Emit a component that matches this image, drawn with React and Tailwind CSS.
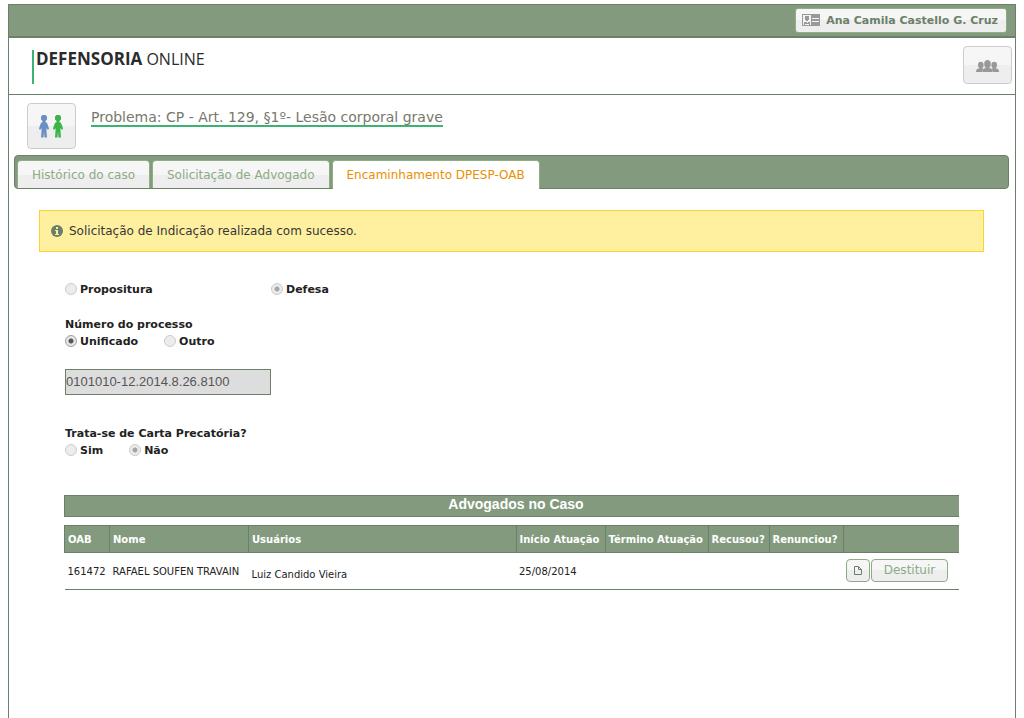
import { useState } from 'react';

const verdana = "font-['DejaVu_Sans',Verdana,sans-serif]";
const buttonFace = 'bg-linear-to-b from-[#f6f6f6] from-50% to-[#eeeeee] to-50%';

const CardIcon = () => (
  <svg className="mb-1" width="18" height="12" viewBox="0 0 18 12" shapeRendering="crispEdges" aria-hidden="true">
    <rect width="18" height="12" fill="#999999" />
    <rect x="1" y="1" width="8" height="10" fill="#f4f4f4" />
    <path d="M3 2h4v4H3zM4 6h2v1H4zM2 8h2l1 1 1-1h2v3H7v-1H3v1H2z" fill="#999999" />
    <path d="M10 4h7v1h-7zM10 7h7v1h-7z" fill="#f4f4f4" />
  </svg>
);

const GroupIcon = () => (
  <svg className="mt-[2px]" width="23" height="12" viewBox="0 0 23 12" fill="#99999b" aria-hidden="true">
    <ellipse cx="4.800" cy="5" rx="2.800" ry="3.200" />
    <ellipse cx="18.200" cy="5" rx="2.800" ry="3.200" />
    <path d="M0 12c0-2.500.8-3 3.300-3.700V7h3v1.500l1.200.5L6 12zM23 12c0-2.500-.8-3-3.300-3.700V7h-3v1.500l-1.200.5L17 12z" />
    <path d="M6.500 12c0-3 .8-3.300 3.200-4V6h3.600v2c2.400.7 3.200 1 3.200 4z" />
    <ellipse cx="11.500" cy="3.900" rx="3.300" ry="3.900" />
  </svg>
);

const Person = ({ color }) => (
  <svg width="10" height="23" viewBox="0 0 10 23" fill={color} aria-hidden="true">
    <path d="M3.500 0h3L8 1.500v3L6.500 6v1L8 8l1 2.500 1 3L9 15l-1.500-2V16L8 22.500H5.500L5 17l-.5 5.500H2l.5-6.500V13L1 15 0 13.500l1-3L2 8l1.500-1V6L2 4.500v-3z" />
  </svg>
);

const InfoIcon = () => (
  <svg width="12" height="12" viewBox="0 0 12 12" aria-hidden="true">
    <circle cx="6" cy="6" r="6" fill="#6b8068" />
    <path d="M5 2h2v2H5zM4 5h3v4h1v1H4V9h1V6H4z" fill="#fff0a0" />
  </svg>
);

const DocIcon = () => (
  <svg width="8" height="9" viewBox="0 0 8 9" fill="none" stroke="#6b8068" aria-hidden="true">
    <path d="M.5.5h4l3 3v5h-7z" />
    <path d="M4.500.5v3h3" />
  </svg>
);

const Radio = ({ name, value, label, checked, muted, onChange }) => (
  <label className="flex items-start gap-[3px]">
    <input
      type="radio"
      name={name}
      checked={checked}
      onChange={() => onChange(value)}
      className={`mt-px size-3 appearance-none rounded-full border ${
        muted
          ? 'border-[#cccccc] bg-[#ececec] checked:bg-[radial-gradient(circle,#a6a6a6_0_2px,#ececec_3px)]'
          : 'border-[#a0a0a0] bg-[#e6e6e6] checked:bg-[radial-gradient(circle,#555555_0_2px,#e6e6e6_3px)]'
      }`}
    />
    {label}
  </label>
);

const tabs = ['Histórico do caso', 'Solicitação de Advogado', 'Encaminhamento DPESP-OAB'];

const columns = [
  { title: 'OAB', width: 'w-[45px]' },
  { title: 'Nome', width: 'w-[139px]' },
  { title: 'Usuários', width: '' },
  { title: 'Início Atuação', width: 'w-[89px]' },
  { title: 'Término Atuação', width: 'w-[103px]' },
  { title: 'Recusou?', width: 'w-[61px]' },
  { title: 'Renunciou?', width: 'w-[74px]' },
  { title: '', width: 'w-[116px]' },
];

export default function App() {
  const [tab, setTab] = useState(2);
  const [tipo, setTipo] = useState('defesa');
  const [formato, setFormato] = useState('unificado');
  const [carta, setCarta] = useState('nao');

  return (
    <div className={`mx-2 mt-1 min-h-[calc(100vh-4px)] border border-b-0 border-[#6b8068] bg-white text-[#222222] ${verdana}`}>
      <div className="flex h-[33px] items-center justify-end border-b-2 border-[#6b8068] bg-[#839a7e] pr-2">
        <button className={`flex h-[25px] items-center gap-[6px] rounded-[3px] border border-[#8cb083] pt-[2px] pr-2 pl-[6px] text-[11px] font-bold whitespace-nowrap text-[#6b8068] ${buttonFace}`}>
          <CardIcon />
          Ana Camila Castello G. Cruz
        </button>
      </div>

      <header className="flex h-[57px] items-start justify-between border-b border-[#6b8068] pr-[3px] pl-[23px]">
        <h1 className="mt-3 h-[34px] border-l-2 border-[#3cb371] pl-[2px] font-['Open_Sans','Noto_Sans',sans-serif] text-[16px] leading-[18px] text-[#2b2b2b]">
          <strong className="text-[17px]">DEFENSORIA</strong> ONLINE
        </h1>
        <button aria-label="Grupos" className={`mt-2 flex h-[38px] w-[49px] items-center justify-center rounded-[4px] border border-[#cccccc] ${buttonFace}`}>
          <GroupIcon />
        </button>
      </header>

      <div className="flex h-[60px] items-start gap-[15px] pt-2 pl-[18px]">
        <button aria-label="Pessoas" className={`flex h-[46px] w-[49px] items-center justify-center gap-1 rounded-[4px] border border-[#cccccc] pr-[2px] ${buttonFace}`}>
          <Person color="#6a8fc4" />
          <Person color="#3bb449" />
        </button>
        <h2 className="mt-[6px] border-b-2 border-[#3cb371] text-[14px] leading-4 text-[#77796c]">
          Problema: CP - Art. 129, §1º- Lesão corporal grave
        </h2>
      </div>

      <nav className="mr-[6px] ml-[5px] flex h-[34px] items-end gap-[2px] rounded-[4px] border border-[#6b8068] bg-[#839a7e] pl-[2px]">
        {tabs.map((title, i) => (
          <button
            key={title}
            onClick={() => setTab(i)}
            className={`rounded-t-[4px] border border-b-0 border-[#8cb083] px-[14px] text-[12px] whitespace-nowrap ${
              tab === i
                ? '-mb-px h-[29px] bg-white text-[#eb8f00]'
                : `h-7 text-[#8cac85] ${buttonFace}`
            }`}
          >
            {title}
          </button>
        ))}
      </nav>

      <main className="pt-[21px] pr-[31px] pl-[30px]">
        <p className="flex h-[42px] items-center gap-[6px] border border-[#fad42e] bg-[#fff0a0] pl-[11px] text-[12px] text-[#363636]">
          <InfoIcon />
          Solicitação de Indicação realizada com sucesso.
        </p>

        <form className="pt-[30px] pl-[26px] text-[11px] leading-4 font-bold">
          <div className="flex">
            <div className="w-[206px]">
              <Radio name="tipo" value="propositura" label="Propositura" checked={tipo === 'propositura'} muted onChange={setTipo} />
            </div>
            <Radio name="tipo" value="defesa" label="Defesa" checked={tipo === 'defesa'} muted onChange={setTipo} />
          </div>

          <fieldset className="mt-[19px]">
            <legend>Número do processo</legend>
            <div className="mt-px flex gap-[26px]">
              <Radio name="formato" value="unificado" label="Unificado" checked={formato === 'unificado'} onChange={setFormato} />
              <Radio name="formato" value="outro" label="Outro" checked={formato === 'outro'} muted onChange={setFormato} />
            </div>
          </fieldset>
          <input
            type="text"
            aria-label="Número do processo"
            defaultValue="0101010-12.2014.8.26.8100"
            className="mt-[19px] block h-[26px] w-[206px] border border-[#6b8068] bg-[#dddddd] pb-[2px] font-['Liberation_Sans',Arial,sans-serif] text-[13px] font-normal text-[#555555]"
          />

          <fieldset className="mt-[31px]">
            <legend>Trata-se de Carta Precatória?</legend>
            <div className="mt-px flex gap-[26px]">
              <Radio name="carta" value="sim" label="Sim" checked={carta === 'sim'} muted onChange={setCarta} />
              <Radio name="carta" value="nao" label="Não" checked={carta === 'nao'} muted onChange={setCarta} />
            </div>
          </fieldset>
        </form>

        <section className="mt-9 mr-[25px] ml-[25px]">
          <h3 className="h-[22px] border border-r-0 border-[#6b8068] bg-[#839a7e] text-center font-['Liberation_Sans',Arial,sans-serif] text-[14px] leading-4 font-bold text-white pl-2">
            Advogados no Caso
          </h3>
          <table className="mt-2 w-full table-fixed border-collapse text-left whitespace-nowrap">
            <thead>
              <tr className="h-[27px] bg-[#839a7e] text-[10px] text-white">
                {columns.map(({ title, width }) => (
                  <th key={title} className={`border border-[#6b8068] p-0 pl-[3px] last:border-r-0 ${width}`}>
                    {title}
                  </th>
                ))}
              </tr>
            </thead>
            <tbody>
              <tr className="h-[37px] border-b border-[#6b8068] text-[10px]">
                <td className="pl-[3px]">161472</td>
                <td className="pl-[3px]">RAFAEL SOUFEN TRAVAIN</td>
                <td className="pt-[6px] pl-[3px]">Luiz Candido Vieira</td>
                <td className="pl-[3px]">25/08/2014</td>
                <td />
                <td />
                <td />
                <td className="pb-[2px] pl-[3px]">
                  <div className="flex gap-px">
                    <button aria-label="Documento" className={`flex h-[23px] w-6 items-center justify-center rounded-[4px] border border-[#8cac85] ${buttonFace}`}>
                      <DocIcon />
                    </button>
                    <button className={`h-[23px] w-[77px] rounded-[4px] border border-[#8cac85] text-[12px] text-[#8cac85] ${buttonFace}`}>
                      Destituir
                    </button>
                  </div>
                </td>
              </tr>
            </tbody>
          </table>
        </section>
      </main>
    </div>
  );
}
